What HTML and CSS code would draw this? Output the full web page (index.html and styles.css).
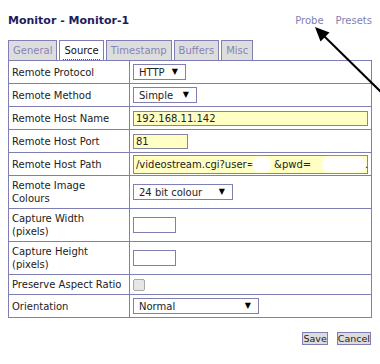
FILE: index.html
```html
<!DOCTYPE html>
<html lang="en">
<head>
    <meta charset="UTF-8">
    <meta name="viewport" content="width=device-width, initial-scale=1.0">
    <title>Monitor - Monitor-1</title>
    <link rel="stylesheet" href="styles.css">
</head>
<body>
    <div class="page">
        <div class="header">
            <h2>Monitor - Monitor-1</h2>
            <div class="links">
                <a href="#">Probe</a>
                <a href="#">Presets</a>
            </div>
        </div>
        <ul class="tabs">
            <li>General</li>
            <li class="active"><span>Source</span></li>
            <li>Timestamp</li>
            <li>Buffers</li>
            <li>Misc</li>
        </ul>
        <table class="form">
            <colgroup><col class="c-label"><col></colgroup>
            <tr>
                <td>Remote Protocol</td>
                <td><span class="sel w-http"><select><option>HTTP</option></select></span></td>
            </tr>
            <tr>
                <td>Remote Method</td>
                <td><span class="sel w-simple"><select><option>Simple</option></select></span></td>
            </tr>
            <tr>
                <td>Remote Host Name</td>
                <td><input type="text" class="txt wide" value="192.168.11.142"></td>
            </tr>
            <tr>
                <td>Remote Host Port</td>
                <td><input type="text" class="txt port" value="81"></td>
            </tr>
            <tr>
                <td>Remote Host Path</td>
                <td>
                    <span class="path">
                        <input type="text" class="txt wide tall" value="/videostream.cgi?user=      &amp;pwd=">
                        <span class="blot b1"></span>
                        <span class="blot b2"></span>
                        <span class="dot">.</span>
                    </span>
                </td>
            </tr>
            <tr class="two">
                <td>Remote Image<br>Colours</td>
                <td><span class="sel w-colour"><select><option>24 bit colour</option></select></span></td>
            </tr>
            <tr class="two">
                <td>Capture Width<br>(pixels)</td>
                <td><input type="text" class="txt plain small"></td>
            </tr>
            <tr class="two">
                <td>Capture Height<br>(pixels)</td>
                <td><input type="text" class="txt plain small"></td>
            </tr>
            <tr class="short">
                <td>Preserve Aspect Ratio</td>
                <td><input type="checkbox" class="check"></td>
            </tr>
            <tr>
                <td>Orientation</td>
                <td><span class="sel w-orient"><select><option>Normal</option></select></span></td>
            </tr>
        </table>
        <div class="buttons">
            <button>Save</button>
            <button>Cancel</button>
        </div>
        <svg class="arrow" width="380" height="100" viewBox="0 0 380 100">
            <line x1="381" y1="92" x2="324" y2="36" stroke="#000" stroke-width="2"/>
            <polygon points="315,27 320.5,41.5 329.5,32.5" fill="#000"/>
        </svg>
    </div>
</body>
</html>
```

FILE: styles.css
```css
*, *:before, *:after {
    box-sizing: border-box;
}
body {
    margin: 0;
    background: white;
    color: #222222;
    font-family: "DejaVu Sans", Verdana, sans-serif;
    font-size: 10px;
}
.page {
    position: relative;
    width: 380px;
    height: 364px;
    padding: 0 8px;
}
.header {
    display: flex;
    justify-content: space-between;
    align-items: baseline;
    height: 40px;
    padding-top: 14px;
}
.header h2 {
    margin: 0;
    font-size: 11px;
    line-height: 13px;
    font-weight: bold;
    color: #1d1d5c;
}
.links {
    display: flex;
    gap: 12px;
}
.links a {
    color: #7f7fb5;
    text-decoration: none;
}
.tabs {
    display: flex;
    gap: 2px;
    margin: 0;
    padding: 0;
    list-style: none;
    height: 20px;
}
.tabs li {
    height: 20px;
    padding: 0 4px;
    line-height: 19px;
    background: #dddddd;
    color: #8585b5;
    border: 1px solid #7f7fb5;
    border-bottom: none;
}
.tabs li.active {
    background: white;
    color: #111111;
    padding: 0 3px;
}
.tabs li.active span {
    display: block;
    height: 19px;
    padding: 0 1px;
    border-bottom: 1px dotted #555555;
}
.form {
    width: 364px;
    table-layout: fixed;
    border-collapse: collapse;
    border: 1px solid #7f7fb5;
}
.c-label {
    width: 121px;
}
.form td {
    border: 1px solid #7f7fb5;
    height: 23px;
    padding: 0 5px 0 3px;
    line-height: 13px;
    white-space: nowrap;
    vertical-align: middle;
}
.form tr.two td {
    height: 33px;
}
.form tr.short td {
    height: 20px;
}
.sel {
    position: relative;
    display: inline-block;
    vertical-align: middle;
}
.sel select {
    appearance: none;
    -webkit-appearance: none;
    width: 100%;
    height: 16px;
    margin: 0;
    padding: 0 0 0 5px;
    font-family: inherit;
    font-size: 10px;
    color: #222222;
    background: white;
    border: 1px solid #7f7fb5;
    border-radius: 0;
    outline: none;
}
.sel:after {
    content: "\25BC";
    position: absolute;
    right: 8px;
    top: 3px;
    font-size: 8px;
    line-height: 9px;
    color: #000000;
    pointer-events: none;
}
.w-http { width: 53px; }
.w-simple { width: 64px; }
.w-colour { width: 100px; }
.w-orient { width: 126px; }
.txt {
    display: block;
    height: 15px;
    margin: 0;
    padding: 0 2px;
    font-family: inherit;
    font-size: 10px;
    color: #222222;
    background: #ffffc4;
    border: 1px solid #85859f;
    outline: none;
}
.txt.wide { width: 235px; }
.txt.tall { height: 19px; }
.txt.port { width: 55px; }
.txt.plain {
    background: white;
    border-color: #7f7fb5;
}
.txt.small {
    width: 43px;
    height: 16px;
}
.path {
    position: relative;
    display: block;
}
.blot {
    position: absolute;
    top: 3px;
    height: 13px;
    background: white;
    border-radius: 6px;
    box-shadow: 0 0 2px 1px white;
}
.blot.b1 { left: 120px; width: 17px; }
.blot.b2 { left: 190px; width: 42px; }
.dot {
    position: absolute;
    left: 232px;
    top: 3px;
}
.check {
    appearance: none;
    -webkit-appearance: none;
    display: block;
    width: 12px;
    height: 12px;
    margin: 0;
    background: #e6e6e6;
    border: 1px solid #a8a8a8;
    border-radius: 2px;
}
.buttons {
    display: flex;
    justify-content: flex-end;
    gap: 9px;
    padding-top: 14px;
    padding-right: 1px;
}
.buttons button {
    height: 13px;
    padding: 0;
    font-family: inherit;
    font-size: 9.5px;
    line-height: 11px;
    color: #222222;
    background: #dcdcdc;
    border: 1px solid #7f7fb5;
    border-radius: 0;
}
.arrow {
    position: absolute;
    top: 0;
    left: 0;
    pointer-events: none;
}
```
